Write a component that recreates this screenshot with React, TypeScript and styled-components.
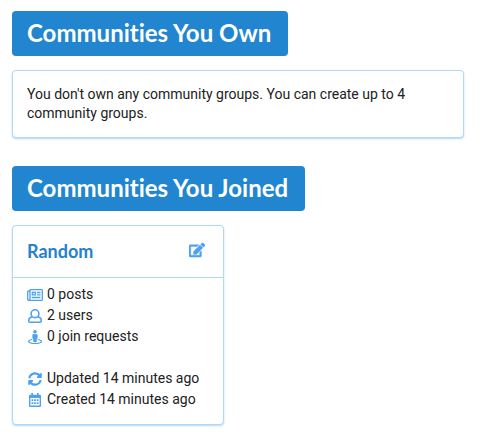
import React from "react";
import styled, { createGlobalStyle } from "styled-components";
import { FaEdit, FaStreetView, FaSyncAlt } from "react-icons/fa";

const GlobalStyle = createGlobalStyle`
  *, *::before, *::after { box-sizing: border-box; }
  body {
    margin: 0;
    background: #fff;
    color: #212121;
    font: 14px/19px Roboto, sans-serif;
  }
`;

const Page = styled.main`
  padding: 11px 24px 20px 12px;
`;

const Section = styled.section`
  & + & { margin-top: 28px; }
`;

const Banner = styled.h2`
  width: fit-content;
  margin: 0 0 14px;
  padding: 7px 17px 8px 15px;
  border-radius: 4px;
  background: #2185d0;
  color: #fff;
  font: 700 24px/30px Lato, sans-serif;
  font-variant-ligatures: none;
`;

const Panel = styled.div`
  border: 1px solid #b3d7f8;
  border-radius: 4px;
  background: #fff;
  box-shadow: 0 1px 2px #b3d7f8;
`;

const Notice = styled(Panel)`
  padding: 14px;

  p { margin: 0; }
`;

const Card = styled(Panel)`
  width: fit-content;
`;

const CardHeader = styled.header`
  display: flex;
  align-items: center;
  justify-content: space-between;
  padding: 14px 18px 14px 14px;
  border-bottom: 1px solid #b3d7f8;
`;

const CardTitle = styled.h3`
  margin: 0;
  color: #2680cc;
  font: 700 18px/23px Lato, sans-serif;
`;

const EditButton = styled.button`
  display: flex;
  padding: 0 0 3px;
  border: 0;
  background: none;
  color: #4da1f2;
  font-size: 16px;
  cursor: pointer;

  path { stroke: currentColor; stroke-width: 16px; }
`;

const CardBody = styled.div`
  display: grid;
  gap: 21px;
  padding: 6px 24px 14px 14px;
`;

const Facts = styled.ul`
  margin: 0;
  padding: 0;
  list-style: none;
`;

const Fact = styled.li`
  display: flex;
  align-items: center;
  gap: 4px;
  line-height: 21px;
`;

const FactIcon = styled.span`
  display: flex;
  justify-content: center;
  width: 16px;
  color: #4da1f2;
  font-size: 14px;

  svg { flex: none; }
`;

const NewspaperOutline = () => (
  <svg width="16" height="12" viewBox="0 0 16 12" fill="none" stroke="currentColor" strokeWidth="1.3">
    <path d="M3 1.200q0-.5.5-.5H14.700q.6 0 .6.6v9.400q0 .6-.6.6H2q-1.300 0-1.300-1.300V2.600q0-.6.6-.6H3v8q0 1.200-1 1.200" />
    <rect x="5.400" y="3.300" width="3" height="2.600" />
    <path d="M10 3.500h3.500M10 5.800h3.500M4.800 8.500h8.700" />
  </svg>
);

const UserOutline = () => (
  <svg width="14" height="14" viewBox="0 0 14 14" fill="none" stroke="currentColor" strokeWidth="1.6" strokeLinejoin="round">
    <circle cx="7" cy="4.700" r="3.900" />
    <path d="M4.300 7.700 2.400 8.500C1.300 9 .8 9.800 .8 11v1.100c0 .7.4 1.100 1.100 1.100h10.200c.7 0 1.100-.4 1.100-1.100V11c0-1.200-.5-2-1.600-2.500L9.700 7.700" />
  </svg>
);

const CalendarOutline = () => (
  <svg width="14" height="14" viewBox="0 0 14 14" fill="currentColor">
    <path
      fillRule="evenodd"
      d="M3.300 0h1.700v1.700h4V0h1.700v1.700h1q1.300 0 1.300 1.300v9.700q0 1.300-1.300 1.300H2.300Q1 14 1 12.700V3q0-1.300 1.300-1.300h1zM2.400 5v7.300q0 .3.3.3h8.600q.3 0 .3-.3V5z"
    />
    <path d="M3.500 6.300h1.800v1.700H3.500zM6.100 6.300h1.800v1.700H6.100zM8.700 6.300h1.800v1.700H8.700zM3.500 9.300h1.800v1.700H3.500zM6.100 9.300h1.800v1.700H6.100zM8.700 9.300h1.800v1.700H8.700z" />
  </svg>
);

type FactItem = { icon: React.ReactNode; text: string };

const counts: FactItem[] = [
  { icon: <NewspaperOutline />, text: "0 posts" },
  { icon: <UserOutline />, text: "2 users" },
  { icon: <FaStreetView />, text: "0 join requests" },
];

const dates: FactItem[] = [
  { icon: <FaSyncAlt />, text: "Updated 14 minutes ago" },
  { icon: <CalendarOutline />, text: "Created 14 minutes ago" },
];

const FactList = ({ items }: { items: FactItem[] }) => (
  <Facts>
    {items.map(({ icon, text }) => (
      <Fact key={text}>
        <FactIcon aria-hidden="true">{icon}</FactIcon>
        {text}
      </Fact>
    ))}
  </Facts>
);

export default function App() {
  return (
    <>
      <GlobalStyle />
      <Page>
        <Section>
          <Banner>Communities You Own</Banner>
          <Notice>
            <p>You don't own any community groups. You can create up to 4 community groups.</p>
          </Notice>
        </Section>
        <Section>
          <Banner>Communities You Joined</Banner>
          <Card>
            <CardHeader>
              <CardTitle>Random</CardTitle>
              <EditButton type="button" aria-label="Edit Random">
                <FaEdit />
              </EditButton>
            </CardHeader>
            <CardBody>
              <FactList items={counts} />
              <FactList items={dates} />
            </CardBody>
          </Card>
        </Section>
      </Page>
    </>
  );
}
